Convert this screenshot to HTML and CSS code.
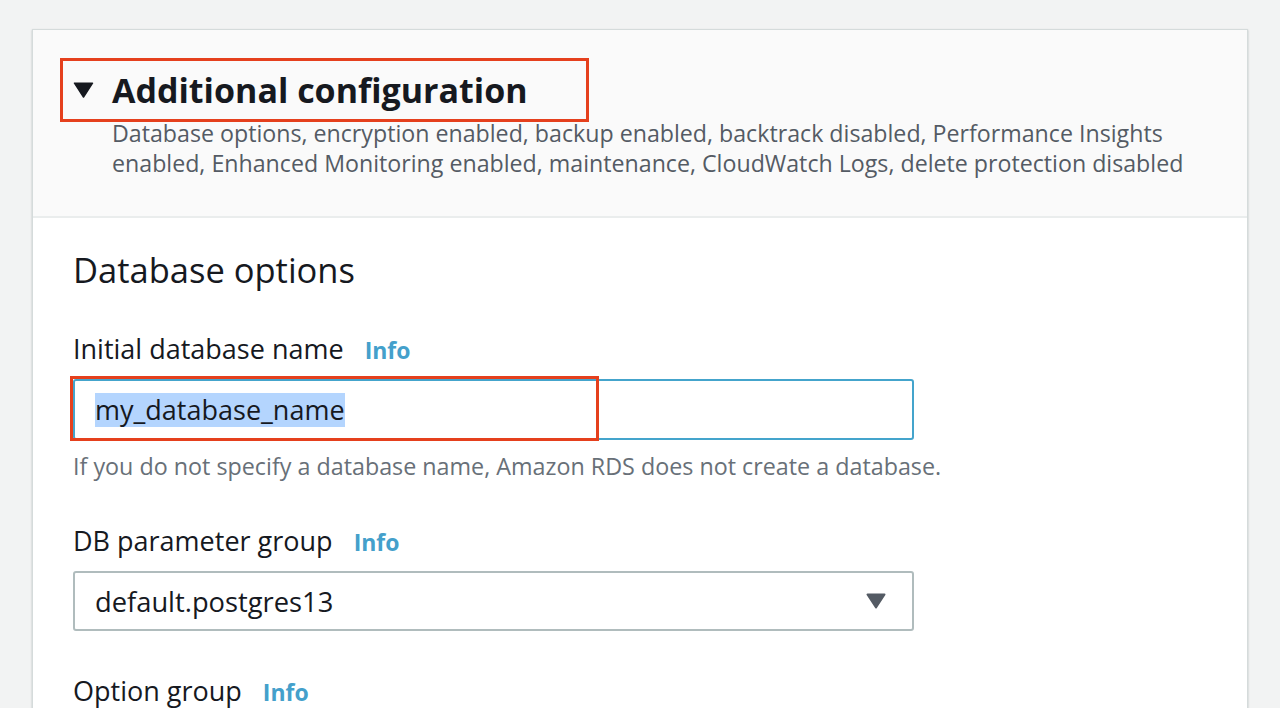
FILE: index.html
```html
<!DOCTYPE html>
<html lang="en">
<head>
<meta charset="utf-8">
<title>Additional configuration</title>
<link rel="stylesheet" href="styles.css">
</head>
<body>
<div class="page">
  <section class="card">
    <header class="card-header">
      <div class="title-box">
        <svg class="caret" width="21" height="16" viewBox="0 0 21 16" aria-hidden="true"><path d="M1.5 1.2 H19.5 L10.5 15 Z" fill="#16191f" stroke="#16191f" stroke-width="1.5" stroke-linejoin="round"/></svg>
        <h2 class="title">Additional configuration</h2>
      </div>
      <p class="summary">Database options, encryption enabled, backup enabled, backtrack disabled, Performance Insights enabled, Enhanced Monitoring enabled, maintenance, CloudWatch Logs, delete protection disabled</p>
    </header>
    <div class="card-body">
      <h3 class="section-title">Database options</h3>

      <div class="field first">
        <div class="label-row"><span class="label">Initial database name</span><span class="info">Info</span></div>
        <div class="control">
          <div class="input focused"><span class="selected-text">my_database_name</span></div>
          <div class="highlight-box"></div>
        </div>
        <p class="hint">If you do not specify a database name, Amazon RDS does not create a database.</p>
      </div>

      <div class="field">
        <div class="label-row"><span class="label">DB parameter group</span><span class="info">Info</span></div>
        <div class="control">
          <div class="select"><span>default.postgres13</span>
            <svg class="select-caret" width="20" height="16" viewBox="0 0 20 16" aria-hidden="true"><path d="M1.5 1.5 H18.5 L10 14.5 Z" fill="#545b64" stroke="#545b64" stroke-width="2" stroke-linejoin="round"/></svg>
          </div>
        </div>
      </div>

      <div class="field">
        <div class="label-row"><span class="label">Option group</span><span class="info">Info</span></div>
      </div>
    </div>
  </section>
</div>
</body>
</html>
```
FILE: styles.css
```css
* { box-sizing: border-box; }
html, body { margin: 0; padding: 0; }
body {
  background: #f2f3f3;
  font-family: "Open Sans", "Noto Sans", "Liberation Sans", sans-serif;
  color: #16191f;
  overflow: hidden;
}
.page {
  padding: 29px 32px 0 32px;
  height: 708px;
}
.card {
  background: #ffffff;
  border: 1px solid #d5dbdb;
  border-bottom: none;
  box-shadow: 0 1px 2px rgba(0, 28, 36, 0.25);
  height: 700px;
}
.card-header {
  background: #fafafa;
  border-bottom: 2px solid #eaeded;
  padding: 28px 0 38px 27px;
}
.title-box {
  display: inline-flex;
  align-items: center;
  border: 3px solid #e5401d;
  height: 64px;
  padding: 0 0 0 10px;
  width: 529px;
}
.caret { display: block; flex: none; }
.title {
  margin: 0 0 0 18px;
  font-size: 34px;
  font-weight: 700;
  line-height: 40px;
  color: #16191f;
  white-space: nowrap;
}
.summary {
  margin: -4px 50px 0 52px;
  font-size: 23.2px;
  line-height: 30px;
  color: #545b64;
}
.card-body {
  padding: 32px 0 0 40px;
}
.section-title {
  margin: 0;
  font-size: 34.5px;
  font-weight: 400;
  line-height: 40px;
}
.field { margin-top: 41px; }
.field + .field { margin-top: 42px; }
.label-row {
  display: flex;
  align-items: baseline;
  gap: 21px;
  height: 36px;
  line-height: 36px;
}
.label { font-size: 27px; }
.info {
  font-size: 23px;
  font-weight: 700;
  color: #44a0cb;
}
.control {
  position: relative;
  margin-top: 12px;
  width: 841px;
}
.input {
  height: 61px;
  border: 2px solid #44a4cc;
  border-radius: 3px;
  padding-left: 20px;
  display: flex;
  align-items: center;
  font-size: 27px;
}
.selected-text {
  background: #b4d5fe;
  line-height: 34px;
}
.highlight-box {
  position: absolute;
  left: -3px;
  top: -3px;
  width: 529px;
  height: 65px;
  border: 3px solid #e5401d;
}
.hint {
  margin: 11px 0 0 0;
  font-size: 23.3px;
  line-height: 30px;
  color: #687078;
}
.select {
  height: 60px;
  border: 2px solid #b0bcbd;
  border-radius: 3px;
  padding: 0 26px 0 20px;
  display: flex;
  align-items: center;
  justify-content: space-between;
  font-size: 27.3px;
}
.select-caret { display: block; }
```
